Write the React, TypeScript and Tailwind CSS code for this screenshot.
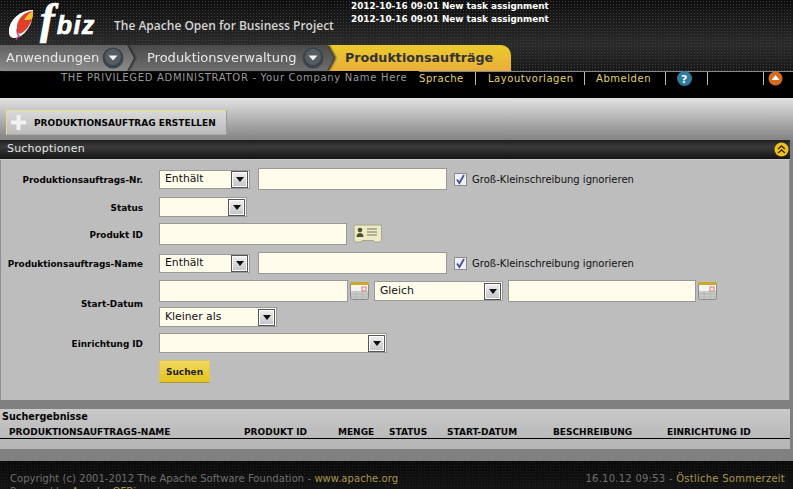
const FONT = "font-['DejaVu_Sans',sans-serif]";

function Arrow() {
  return (
    <span className="flex h-[17px] w-[17px] items-center justify-center border border-[#555] bg-[linear-gradient(#f0f0f0,#c4c4c8)] shadow-[inset_0_0_0_1px_#fff]">
      <svg width="8" height="5" viewBox="0 0 8 5"><path d="M0 0h8L4 5z" fill="#111" /></svg>
    </span>
  );
}

function Select({ value, width, short }: { value?: string; width: string; short?: boolean }) {
  return (
    <div className={`flex items-center justify-between border border-[#999] bg-[#fffcec] pl-[5px] pr-[1px] text-[10.8px] text-[#111] ${short ? "h-[19px]" : "h-[20px]"} ${width}`}>
      <span>{value}</span>
      <Arrow />
    </div>
  );
}

function Field({ width }: { width: string }) {
  return <div className={`h-[22px] border border-[#999] bg-[#fffcec] ${width}`} />;
}

function Check() {
  return (
    <div className="flex items-center gap-[5px] whitespace-nowrap text-[10px] text-[#111]">
      <span className="flex h-[13px] w-[13px] items-center justify-center border border-[#8a8a8a] bg-[#f1f1f1]">
        <svg width="11" height="11" viewBox="0 0 11 11"><path d="M2 5.500l2.400 3.500L9 1" fill="none" stroke="#3f4fa8" strokeWidth="1.800" /></svg>
      </span>
      <span>Groß-Kleinschreibung ignorieren</span>
    </div>
  );
}

function Calendar() {
  return (
    <svg width="20" height="20" viewBox="0 0 20 20" className="shrink-0">
      <rect x="0.5" y="1.5" width="18" height="17" rx="2" fill="#c9ccc9" stroke="#8a8a8a" />
      <rect x="0.5" y="1" width="18" height="3" fill="#c9a92c" />
      <rect x="1" y="4" width="17" height="6" fill="#f4f4f0" />
      <rect x="12" y="6" width="4" height="4" fill="none" stroke="#e8707a" />
      <path d="M1 13h17M1 16h17M6 10v8M12 10v8" stroke="#b4b8b4" />
    </svg>
  );
}

function Card() {
  return (
    <svg width="29" height="20" viewBox="0 0 29 20" className="shrink-0">
      <path d="M2 1h25a1.500 1.500 0 0 1 1.500 1.500V16q0 2-2 2h-5l-1-1.500H9L8 18H3q-2 0-2-2V2.500Q1 1 2 1z" fill="#ecebc6" stroke="#a8a688" />
      <circle cx="7" cy="6" r="2.300" fill="#4c5230" />
      <path d="M3.500 13c0-3 1.500-4 3.500-4s3.500 1 3.500 4z" fill="#4c5230" />
      <path d="M14 5h10M14 8h10M14 11h10" stroke="#77775d" />
    </svg>
  );
}

function Row({ label, children, className }: { label: string; children: React.ReactNode; className?: string }) {
  return (
    <div className={`flex items-center ${className ?? ""}`}>
      <div className="w-[143px] shrink-0 whitespace-nowrap pt-[3px] text-right text-[8.900px] font-bold text-[#050505]">{label}</div>
      <div className="ml-[16px] flex items-center">{children}</div>
    </div>
  );
}

function TabBadge() {
  return (
    <svg width="22" height="22" viewBox="0 0 22 22" className="shrink-0">
      <circle cx="11" cy="11" r="10.500" fill="#3d434b" />
      <circle cx="11" cy="10" r="8" fill="#565c64" />
      <path d="M6.500 8.500h9L11 13.500z" fill="#f2f2f2" />
    </svg>
  );
}

const chevron = "[clip-path:polygon(0_0,calc(100%-7px)_0,100%_50%,calc(100%-7px)_100%,0_100%)]";

export default function App() {
  return (
    <div className={`flex h-[489px] w-[793px] flex-col overflow-hidden bg-[#808080] ${FONT}`}>
      {/* header */}
      <div className="flex h-[45px] shrink-0 bg-[radial-gradient(#3c3c3c_1px,transparent_1px),linear-gradient(#0e0e0e,#2b2b2b)] bg-[length:3px_3px,100%_100%]">
        <div className="flex w-[114px] shrink-0 items-start pl-[9px]">
          <svg width="25" height="38" viewBox="0 0 25 38" className="mt-[9px] shrink-0">
            <path d="M24 1C14 1 2 8 0 20c-1 7 2 9 5 9 8 0 14-8 17-15 1-4 2-9 2-13z" fill="#fff" />
            <path d="M24 2c-9 1-15 7-16 15-.5 5 1 7 3 8 6-3 10-9 12-15 1-3 1-6 1-8z" fill="#e0402a" />
            <path d="M24 2c-4 2-7 5-9 9 3 0 6 0 8-1 1-3 1-6 1-8z" fill="#f4c430" />
            <path d="M8 20c0 4 1 6 2 7-1 1-2 2-3 4" fill="none" stroke="#c03a80" strokeWidth="1.500" />
          </svg>
          <span className="ml-[6px] whitespace-nowrap leading-[40px] text-white [-webkit-text-stroke:0.7px_white]">
            <span className="font-['Liberation_Serif',serif] text-[44px] font-bold italic">f</span>
            <span className="ml-[2px] font-['Liberation_Sans',sans-serif] text-[25px] font-bold italic tracking-[1.5px]">biz</span>
          </span>
        </div>
        <div className="mt-[17px] w-[231px] shrink-0 whitespace-nowrap font-['Open_Sans',sans-serif] text-[12px] font-semibold leading-[17px] text-[#d4d4d4]">The Apache Open for Business Project</div>
        <div className="ml-[6px] whitespace-nowrap text-[8.850px] font-bold leading-[13px] text-white">
          <div>2012-10-16 09:01 New task assignment</div>
          <div>2012-10-16 09:01 New task assignment</div>
        </div>
      </div>
      {/* tabs */}
      <div className="flex h-[26px] shrink-0 bg-[radial-gradient(#3c3c3c_1px,transparent_1px),linear-gradient(#2b2b2b,#181818)] bg-[length:3px_3px,100%_100%]">
        <div className="relative z-20 drop-shadow-[2px_0_1px_#2c2c2c]">
          <div className={`flex h-[26px] w-[134px] items-center bg-[linear-gradient(#616161,#8b8b8b)] pl-[6px] pr-[10px] text-[13px] text-[#e8e8e8] ${chevron}`}>
            <span className="flex-1">Anwendungen</span>
            <TabBadge />
          </div>
        </div>
        <div className="relative z-10 -ml-[8px] drop-shadow-[2px_0_1px_#2c2c2c]">
          <div className={`flex h-[26px] w-[208px] items-center bg-[linear-gradient(#4a4a4a,#6e6e6e)] pl-[21px] pr-[10px] text-[13px] text-[#e8e8e8] ${chevron}`}>
            <span className="flex-1">Produktionsverwaltung</span>
            <TabBadge />
          </div>
        </div>
        <div className="-ml-[8px] flex h-[26px] w-[185px] items-center rounded-tr-[10px] bg-[linear-gradient(#eacb2c,#e9ae3a)] pl-[19px] text-[12.700px] font-bold text-[#333]">
          Produktionsaufträge
        </div>
      </div>
      {/* user bar */}
      <div className="flex h-[27px] shrink-0 items-start bg-black text-[10px]">
        <div className="ml-[61px] w-[358px] shrink-0 whitespace-nowrap leading-[13px] tracking-[0.69px] text-[#9a9a9a]">THE PRIVILEGED ADMINISTRATOR - Your Company Name Here</div>
        <div className="flex h-[15px] flex-1 items-center border-t border-[#8a8a8a] pb-[1px] leading-[13px] tracking-[0.55px] text-[#e3d55f]" >
          <span className="w-[56px]">Sprache</span>
          <span className="h-full w-[13px] border-l border-[#bbb]" />
          <span className="w-[96px]">Layoutvorlagen</span>
          <span className="h-full w-[12px] border-l border-[#bbb]" />
          <span className="w-[69px]">Abmelden</span>
          <span className="h-full w-[12px] border-l border-[#bbb]" />
          <svg width="15" height="15" viewBox="0 0 15 15" className="mr-[15px] shrink-0">
            <circle cx="7.500" cy="7.500" r="7.500" fill="#2f7c9e" />
            <text x="7.500" y="11.500" textAnchor="middle" fontSize="11" fontWeight="bold" fill="#fff">?</text>
          </svg>
          <span className="h-full w-[56px] border-l border-[#bbb]" />
          <span className="h-full w-[5px] border-l border-[#bbb]" />
          <svg width="15" height="15" viewBox="0 0 15 15" className="shrink-0">
            <circle cx="7.500" cy="7.500" r="7" fill="#d76c1e" />
            <path d="M7.500 4l4 5h-8z" fill="#fff" />
          </svg>
        </div>
      </div>
      {/* main */}
      <div className="flex-1 bg-[linear-gradient(#e2e2e2_0,#8c8c8c_38px,#808080_45px)]">
        <div className="h-[37px] pl-[6px] pt-[12px]">
          <div className="flex h-[25px] w-[221px] items-center whitespace-nowrap border border-[#e6dc8a] border-b-[#aaa] border-r-[#999] bg-[linear-gradient(#d9d9d9,#bbb)] pl-[4px] text-[9px] font-bold text-[#050505]">
            <svg width="15" height="15" viewBox="0 0 15 15" className="shrink-0">
              <path d="M5.500 0h4v5.500H15v4H9.500V15h-4V9.500H0v-4h5.500z" fill="#f2f2f2" />
            </svg>
            <span className="ml-[8px] pt-[2px]">PRODUKTIONSAUFTRAG ERSTELLEN</span>
          </div>
        </div>
        {/* search panel */}
        <div className="mt-[5px] w-[790px]">
          <div className="flex h-[20px] items-center justify-between border-b border-[#ccc] bg-[linear-gradient(#1e1e1e,#3a3a3a_35%,#141414)] pl-[7px] pr-[1px] text-[11px] tracking-[0.2px] text-[#e6e6e6]">
            <span>Suchoptionen</span>
            <svg width="15" height="15" viewBox="0 0 15 15">
              <circle cx="7.500" cy="7.500" r="7" fill="#eec21a" />
              <path d="M4 7l3.500-3L11 7M4 11l3.500-3L11 11" fill="none" stroke="#3a3000" strokeWidth="1.500" />
            </svg>
          </div>
          <div className="flex h-[240px] flex-col border-x border-[#8f8f8f] bg-[#bdbdbd] pt-[8px]">
            <Row label="Produktionsauftrags-Nr." className="-ml-[1px] h-[22px]">
              <Select value="Enthält" width="w-[91px]" short />
              <div className="ml-[8px]"><Field width="w-[189px]" /></div>
              <div className="ml-[7px]"><Check /></div>
            </Row>
            <Row label="Status" className="-ml-[1px] mt-[7px] h-[20px]">
              <Select width="w-[88px]" />
            </Row>
            <Row label="Produkt ID" className="-ml-[1px] mt-[6px] h-[22px]">
              <Field width="w-[188px]" />
              <div className="ml-[6px]"><Card /></div>
            </Row>
            <Row label="Produktionsauftrags-Name" className="-ml-[1px] mt-[7px] h-[22px]">
              <Select value="Enthält" width="w-[91px]" short />
              <div className="ml-[8px]"><Field width="w-[189px]" /></div>
              <div className="ml-[7px]"><Check /></div>
            </Row>
            <Row label="Start-Datum" className="-ml-[1px] mt-[6px] h-[47px]">
              <div className="flex flex-col gap-[5px]">
                <div className="flex items-center">
                  <Field width="w-[189px]" />
                  <div className="ml-[2px]"><Calendar /></div>
                  <div className="ml-[4px]"><Select value="Gleich" width="w-[129px]" /></div>
                  <div className="ml-[5px]"><Field width="w-[188px]" /></div>
                  <div className="ml-[2px]"><Calendar /></div>
                </div>
                <Select value="Kleiner als" width="w-[118px]" />
              </div>
            </Row>
            <Row label="Einrichtung ID" className="-ml-[1px] mt-[6px] h-[20px]">
              <Select width="w-[228px]" />
            </Row>
            <div className="ml-[158px] mt-[7px]">
              <div className="flex h-[23px] w-[51px] items-center justify-center border border-[#d9c75a] border-b-[#a39a55] bg-[linear-gradient(#f0d965,#e6c219)] pt-[2px] text-[9px] font-bold text-[#222]">Suchen</div>
            </div>
          </div>
        </div>
        {/* results */}
        <div className="mt-[9px] w-[790px] bg-[linear-gradient(#c9c9c9,#b4b4b4)] pb-[10px]">
          <div className="pl-[2px] pt-[1px] text-[9.600px] font-bold leading-[14px] text-[#050505]">Suchergebnisse</div>
          <div className="flex h-[15px] items-center whitespace-nowrap border-b border-black pt-[3px] text-[9px] font-bold text-[#050505]">
            <span className="ml-[9px] w-[235px]">PRODUKTIONSAUFTRAGS-NAME</span>
            <span className="w-[94px]">PRODUKT ID</span>
            <span className="w-[51px]">MENGE</span>
            <span className="w-[58px]">STATUS</span>
            <span className="w-[106px]">START-DATUM</span>
            <span className="w-[114px]">BESCHREIBUNG</span>
            <span>EINRICHTUNG ID</span>
          </div>
        </div>
      </div>
      {/* footer */}
      <div className="flex h-[28px] shrink-0 justify-between overflow-hidden whitespace-nowrap bg-[radial-gradient(#1e1e1e_1px,transparent_1px),linear-gradient(#0a0a0a,#141414)] bg-[length:3px_3px,100%_100%] pl-[10px] pr-[8px] pt-[11px] text-[10px] leading-[13px] text-[#6f6f6f]">
        <div className="tracking-[0.05px]">
          <div>Copyright (c) 2001-2012 The Apache Software Foundation - <span className="text-[#a8964a]">www.apache.org</span></div>
          <div>Powered by <span className="text-[#a8964a]">Apache OFBiz</span></div>
        </div>
        <div className="tracking-[0.25px]">16.10.12 09:53 - <span className="text-[#a8964a]">Östliche Sommerzeit</span></div>
      </div>
    </div>
  );
}
